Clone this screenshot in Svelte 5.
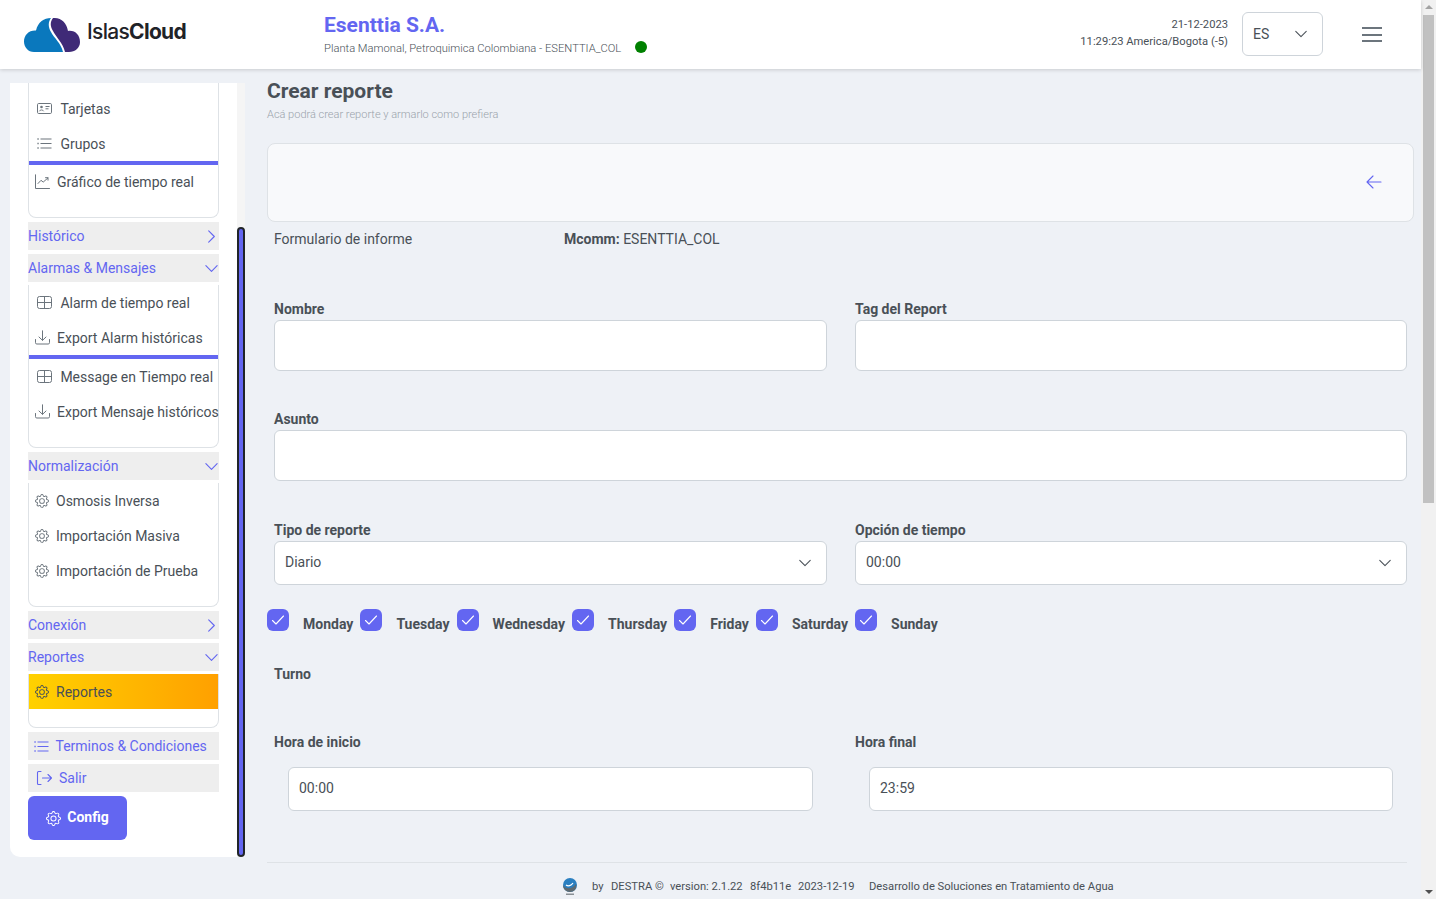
<script>
  const gear = 'gear', table = 'table', down = 'down';
  const groups = [
    { open: true, noHead: true, rows: [
      { t: 'Tarjetas', i: 'card', wide: true }, { t: 'Grupos', i: 'list', wide: true, line: true }, { t: 'Gráfico de tiempo real', i: 'chart' } ] },
    { title: 'Histórico' },
    { title: 'Alarmas & Mensajes', open: true, rows: [
      { t: 'Alarm de tiempo real', i: table, wide: true }, { t: 'Export Alarm históricas', i: down, line: true },
      { t: 'Message en Tiempo real', i: table, wide: true }, { t: 'Export Mensaje históricos', i: down } ] },
    { title: 'Normalización', open: true, rows: [
      { t: 'Osmosis Inversa', i: gear }, { t: 'Importación Masiva', i: gear }, { t: 'Importación de Prueba', i: gear } ] },
    { title: 'Conexión' },
    { title: 'Reportes', open: true, rows: [ { t: 'Reportes', i: gear, active: true } ] }
  ];
  const days = ['Monday', 'Tuesday', 'Wednesday', 'Thursday', 'Friday', 'Saturday', 'Sunday'];
</script>

{#snippet gearIcon(size)}
  <svg class="gear" width={size} height={size} viewBox="0 0 16 16" fill="currentColor" aria-hidden="true">
    <path d="M8 4.754a3.246 3.246 0 1 0 0 6.492 3.246 3.246 0 0 0 0-6.492zM5.754 8a2.246 2.246 0 1 1 4.492 0 2.246 2.246 0 0 1-4.492 0z"/>
    <path d="M9.796 1.343c-.527-1.79-3.065-1.79-3.592 0l-.094.319a.873.873 0 0 1-1.255.52l-.292-.16c-1.64-.892-3.433.902-2.54 2.541l.159.292a.873.873 0 0 1-.52 1.255l-.319.094c-1.79.527-1.79 3.065 0 3.592l.319.094a.873.873 0 0 1 .52 1.255l-.16.292c-.892 1.64.901 3.434 2.541 2.54l.292-.159a.873.873 0 0 1 1.255.52l.094.319c.527 1.79 3.065 1.79 3.592 0l.094-.319a.873.873 0 0 1 1.255-.52l.292.16c1.64.893 3.434-.902 2.54-2.541l-.159-.292a.873.873 0 0 1 .52-1.255l.319-.094c1.79-.527 1.79-3.065 0-3.592l-.319-.094a.873.873 0 0 1-.52-1.255l.16-.292c.893-1.64-.902-3.433-2.541-2.54l-.292.159a.873.873 0 0 1-1.255-.52l-.094-.319zm-2.633.283c.246-.835 1.428-.835 1.674 0l.094.319a1.873 1.873 0 0 0 2.693 1.115l.291-.16c.764-.415 1.6.42 1.184 1.185l-.159.292a1.873 1.873 0 0 0 1.116 2.692l.318.094c.835.246.835 1.428 0 1.674l-.319.094a1.873 1.873 0 0 0-1.115 2.693l.16.291c.415.764-.42 1.6-1.185 1.184l-.291-.159a1.873 1.873 0 0 0-2.693 1.116l-.094.318c-.246.835-1.428.835-1.674 0l-.094-.319a1.873 1.873 0 0 0-2.692-1.115l-.292.16c-.764.415-1.6-.42-1.184-1.185l.159-.291A1.873 1.873 0 0 0 1.945 8.93l-.319-.094c-.835-.246-.835-1.428 0-1.674l.319-.094A1.873 1.873 0 0 0 3.06 4.377l-.16-.292c-.415-.764.42-1.6 1.185-1.184l.292.159a1.873 1.873 0 0 0 2.692-1.115l.094-.319z"/>
  </svg>
{/snippet}

{#snippet listIcon(size)}
  <svg width={size} height={size} viewBox="0 0 15 15" fill="none" stroke="currentColor" stroke-width="1.1" stroke-linecap="butt" aria-hidden="true">
    <path d="M3.500 3h11M3.500 7.500h11M3.500 12h11"/>
    <path d="M.4 3h1.300M.4 7.500h1.300M.4 12h1.300" stroke-width="1.300"/>
  </svg>
{/snippet}

{#snippet chevron(dir)}
  <svg class="chev" width="16" height="16" viewBox="0 0 16 16" fill="none" stroke="currentColor" stroke-width="1.2" stroke-linecap="round" stroke-linejoin="round" aria-hidden="true">
    {#if dir === 'down'}<path d="M2 5l6 6 6-6"/>{:else}<path d="M5 2l6 6-6 6"/>{/if}
  </svg>
{/snippet}

{#snippet rowIcon(i)}
  {#if i === 'gear'}
    {@render gearIcon(14)}
  {:else if i === 'list'}
    {@render listIcon(15)}
  {:else if i === 'card'}
    <svg width="15" height="15" viewBox="0 0 15 15" fill="none" stroke="currentColor" stroke-width="1" aria-hidden="true">
      <rect x=".5" y="2.500" width="14" height="10" rx="1.200"/>
      <circle cx="4.500" cy="6" r="1.300" fill="currentColor" stroke="none"/>
      <path d="M2.300 10.300c.4-1.800 4-1.800 4.400 0" stroke-width=".9"/>
      <path d="M8.500 5.500h4M8.500 7.800h3"/>
    </svg>
  {:else if i === 'table'}
    <svg width="15" height="15" viewBox="0 0 15 15" fill="none" stroke="currentColor" stroke-width="1" aria-hidden="true">
      <rect x=".5" y="1.500" width="14" height="12" rx="2"/><path d="M.5 7.500h14M7.500 1.500v12"/>
    </svg>
  {:else if i === 'down'}
    <svg width="15" height="15" viewBox="0 0 15 15" fill="none" stroke="currentColor" stroke-width="1" stroke-linecap="round" stroke-linejoin="round" aria-hidden="true">
      <path d="M.5 9.500v3.200a1.300 1.300 0 0 0 1.300 1.300h11.400a1.300 1.300 0 0 0 1.300-1.300V9.500M7.500 .8v9.400M4 7l3.500 3.400L11 7"/>
    </svg>
  {:else if i === 'chart'}
    <svg width="15" height="15" viewBox="0 0 15 15" fill="none" stroke="currentColor" stroke-width="1" stroke-linecap="round" stroke-linejoin="round" aria-hidden="true">
      <path d="M.5 .8v13.700h14M3 9.500l3-3.200 2.200 1.800 4.800-4.200M10.500 3.700H13v2.500"/>
    </svg>
  {/if}
{/snippet}

<div class="window">
  <div class="page">
    <header class="topbar">
      <div class="brand">
        <svg width="56" height="35" viewBox="0 0 56 35" aria-hidden="true">
          <path fill="#0a78bd" d="M10 35C4 35 0 30 0 24.500 0 18 5 13 12 13.500 14 5 20 1 27 1 24 5 24 10 27 15 30 21 37 26 39 35Z"/>
          <path fill="#3f2a77" d="M29 1C37 0 43 6 44 14 51 13 56 18 56 25 56 31 51 35 45 35H41C39 26 32 20 29 14 26 9 26 5 29 1Z"/>
        </svg>
        <span class="brand-name"><span class="islas">Islas</span><span class="cloud">Cloud</span></span>
      </div>
      <div class="company">
        <div class="company-name">Esenttia S.A.</div>
        <div class="company-sub"><span>Planta Mamonal, Petroquimica Colombiana - ESENTTIA_COL</span><i class="dot"></i></div>
      </div>
      <div class="clock"><div>21-12-2023</div><div>11:29:23 America/Bogota (-5)</div></div>
      <div class="lang"><span>ES</span>{@render chevron('down')}</div>
      <div class="burger"><i></i><i></i><i></i></div>
    </header>

    <div class="body">
      <aside class="side">
        <nav class="side-card">
          {#each groups as g}
            {#if !g.noHead}
              <div class="menu-head"><span>{g.title}</span>{@render chevron(g.open ? 'down' : 'right')}</div>
            {/if}
            {#if g.open}
              <div class="sub" class:cut={g.noHead}>
                {#each g.rows as r}
                  <div class="row" class:wide={r.wide} class:active={r.active}>{@render rowIcon(r.i)}<span>{r.t}</span></div>
                  {#if r.line}<div class="divider"></div>{/if}
                {/each}
              </div>
            {/if}
          {/each}
          <div class="menu-head plain"><span class="lead">{@render listIcon(15)}</span><span>Terminos &amp; Condiciones</span></div>
          <div class="menu-head plain salir">
            <svg width="16" height="16" viewBox="0 0 16 16" fill="none" stroke="currentColor" stroke-width="1.100" stroke-linecap="round" stroke-linejoin="round" aria-hidden="true">
              <path d="M5 1.500H2.500a1 1 0 0 0-1 1v11a1 1 0 0 0 1 1H5M6.500 8h9M12 4.500 15.500 8 12 11.500"/>
            </svg>
            <span>Salir</span>
          </div>
          <button class="config" type="button">{@render gearIcon(15)}<span>Config</span></button>
        </nav>
        <div class="side-track"><div class="side-thumb"></div></div>
      </aside>

      <main class="main">
        <h1>Crear reporte</h1>
        <p class="lead-text">Acá podrá crear reporte y armarlo como prefiera</p>

        <div class="toolbar">
          <svg width="16" height="16" viewBox="0 0 16 16" fill="none" stroke="#6366f1" stroke-width="1.100" stroke-linecap="round" stroke-linejoin="round" aria-hidden="true">
            <path d="M15 8H1M7 2 1 8l6 6"/>
          </svg>
        </div>

        <div class="form">
          <div class="info">
            <span class="info-a">Formulario de informe</span>
            <span><b>Mcomm:</b> ESENTTIA_COL</span>
          </div>

          <div class="cols r1">
            <label class="field"><span>Nombre</span><div class="input tall"></div></label>
            <label class="field"><span>Tag del Report</span><div class="input tall"></div></label>
          </div>
          <label class="field r2"><span>Asunto</span><div class="input tall"></div></label>
          <div class="cols r3">
            <label class="field"><span>Tipo de reporte</span><div class="input select"><em>Diario</em>{@render chevron('down')}</div></label>
            <label class="field"><span>Opción de tiempo</span><div class="input select"><em>00:00</em>{@render chevron('down')}</div></label>
          </div>

          <div class="days">
            {#each days as d}
              <div class="day">
                <span class="check">
                  <svg width="14" height="14" viewBox="0 0 14 14" fill="none" stroke="#fff" stroke-width="1.100" stroke-linecap="round" stroke-linejoin="round" aria-hidden="true"><path d="M1.500 7.500 5 11l7.500-8"/></svg>
                </span>
                <span class="day-name">{d}</span>
              </div>
            {/each}
          </div>

          <div class="turno">Turno</div>

          <div class="cols r4">
            <label class="field"><span>Hora de inicio</span><div class="input select inset"><em>00:00</em></div></label>
            <label class="field"><span>Hora final</span><div class="input select inset"><em>23:59</em></div></label>
          </div>
        </div>

        <footer class="foot">
          <svg class="foot-logo" width="16" height="18" viewBox="0 0 16 18" aria-hidden="true">
            <circle cx="8" cy="7" r="7" fill="#2a7fc0"/>
            <path d="M1 7c2 4 9 5 13-1 1 5-2 8-6 8S1 11 1 7Z" fill="#5f6a70"/>
            <path d="M4 7c2 1.500 5 1 7-2" fill="none" stroke="#fff" stroke-width="1.200"/>
            <rect x="4" y="15.500" width="8" height="1.500" fill="#8a9095"/>
          </svg>
          <span class="f-by">by</span><span class="f-de">DESTRA ©</span><span class="f-ve">version: 2.1.22</span><span class="f-ha">8f4b11e</span><span class="f-da">2023-12-19</span><span>Desarrollo de Soluciones en Tratamiento de Agua</span>
        </footer>
      </main>
    </div>
  </div>

  <div class="vbar" aria-hidden="true">
    <i class="up"></i>
    <div class="vthumb"></div>
    <i class="dn"></i>
  </div>
</div>

<style>
  :global(body) { margin: 0; overflow: hidden; background: #eef1f6; }
  .window { display: flex; width: 1436px; height: 899px; overflow: hidden; font-family: Roboto, "Noto Sans", sans-serif; color: #495057; font-size: 14px; }
  .page { width: 1421px; height: 899px; display: flex; flex-direction: column; }

  .topbar { height: 69px; flex: none; background: #fff; box-shadow: 0 1px 4px rgba(0,0,0,.16); display: flex; align-items: center; position: relative; z-index: 2; }
  .brand { width: 324px; padding-left: 24px; box-sizing: border-box; display: flex; align-items: center; gap: 7px; height: 100%; }
  .brand-name { font-family: Inter, sans-serif; font-size: 21px; color: #1f2328; letter-spacing: -.7px; margin-top: -7px; }
  .islas { font-weight: 500; }
  .cloud { font-weight: 700; }
  .company { flex: 1; display: flex; flex-direction: column; }
  .company-name { font-size: 21px; font-weight: 700; color: #6366f1; line-height: 24px; margin-top: -1px; }
  .company-sub { font-size: 11.2px; font-weight: 300; color: #495057; margin-top: 5px; line-height: 13px; display: flex; align-items: center; gap: 14px; }
  .dot { width: 12px; height: 12px; border-radius: 50%; background: #008000; margin-top: -3px; }
  .clock { text-align: right; font-size: 11.2px; color: #495057; line-height: 17px; margin: -4px 14px 0 0; }
  .lang { width: 81px; height: 44px; box-sizing: border-box; border: 1px solid #ced4da; border-radius: 6px; display: flex; align-items: center; justify-content: space-between; padding: 0 14px 0 10px; font-size: 14px; margin-top: -2px; }
  .lang .chev { width: 14px; height: 14px; color: #495057; }
  .burger { width: 20px; margin: 0 39px 0 39px; display: flex; flex-direction: column; gap: 4.5px; }
  .burger i { display: block; height: 2px; background: #6c757d; }

  .body { flex: 1; display: flex; min-height: 0; }
  .side { display: flex; margin: 14px 0 0 10px; height: 774px; flex: none; }
  .side-card { width: 227px; box-sizing: border-box; padding: 0 18px; background: #fff; border-radius: 0 0 0 10px; }
  .side-track { width: 8px; background: #f5f5f5; display: flex; align-items: flex-end; }
  .side-thumb { width: 8px; height: 630px; box-sizing: border-box; border: 2px solid #212529; border-radius: 5px; background: #6366f1; }

  .menu-head { height: 28px; margin-top: 4px; background: #eee; color: #6366f1; display: flex; align-items: center; justify-content: space-between; font-size: 14px; }
  .menu-head .chev { width: 15px; height: 15px; }
  .plain { justify-content: flex-start; padding-left: 6px; gap: 6.5px; }
  .lead { display: flex; }
  .salir { padding-left: 8px; gap: 7px; }
  .sub { border: 1px solid #dee2e6; border-top: 0; border-radius: 0 0 8px 8px; padding-bottom: 18px; }
  .sub .row:first-child { margin-top: 3px; }
  .sub.cut { padding-top: 5px; }
  .sub.cut .divider { margin-bottom: -1px; }
  .row { height: 35px; display: flex; align-items: center; gap: 7px; padding-left: 6px; color: #495057; white-space: nowrap; font-size: 14px; }
  .row svg { color: #6c757d; flex: none; }
  .row.wide { padding-left: 8px; gap: 8.4px; }
  .row.active { background: linear-gradient(90deg, #ffd100, #ffa000); }
  .row.active svg { color: #495057; }
  .divider { height: 4px; background: #6366f1; }

  .config { margin-top: 4px; width: 99px; height: 44px; border: 0; border-radius: 6px; background: #6366f1; color: #fff; display: flex; align-items: center; justify-content: center; gap: 6px; font: 700 14px Roboto, sans-serif; }
  .config span { margin-top: -2px; }

  .main { flex: 1; min-width: 0; padding: 0 7px 0 22px; }
  h1 { margin: 8px 0 0; font-size: 21px; line-height: 28px; font-weight: 700; color: #495057; }
  .lead-text { margin: 3px 0 0; font-size: 11px; line-height: 14px; font-weight: 300; color: #9aa3ab; }
  .toolbar { margin-top: 21px; height: 79px; box-sizing: border-box; border: 1px solid #dee2e6; border-radius: 8px; background: #f8f9fb; display: flex; align-items: center; justify-content: flex-end; padding: 0 31px 2px 0; }
  .form { padding: 0 7px; }
  .info { display: flex; height: 34px; align-items: center; }
  .info-a { width: 290px; }
  .info b { font-weight: 700; }
  .cols { display: grid; grid-template-columns: 553px 552px; gap: 28px; }
  .field { display: block; }
  .field > span { display: block; font-weight: 700; line-height: 17px; height: 17px; color: #495057; }
  .input { margin-top: 2px; box-sizing: border-box; background: #fff; border: 1px solid #ced4da; border-radius: 6px; }
  .tall { height: 51px; }
  .r1 { margin-top: 45px; }
  .r2 { margin-top: 40px; }
  .r3 { margin-top: 41px; }
  .select { height: 44px; display: flex; align-items: center; justify-content: space-between; padding: 0 14px 0 10px; }
  .select em { font-style: normal; font-size: 14px; margin-top: -2px; }
  .select .chev { width: 14px; height: 14px; color: #495057; }
  .r4 { margin-top: 51px; }
  .inset { margin: 16px 14px 0; }

  .days { display: flex; margin: 24px 0 0 -7px; gap: 7.1px; }
  .day { display: flex; align-items: flex-start; }
  .check { width: 22px; height: 22px; border-radius: 6px; background: #6366f1; display: flex; align-items: center; justify-content: center; }
  .day-name { margin-left: 14px; margin-top: 6px; font-weight: 700; line-height: 18px; }
  .turno { margin-top: 33px; font-weight: 700; line-height: 17px; }

  .foot { margin-top: 51px; padding: 15px 0 0; border-top: 1px solid #dee2e6; display: flex; align-items: center; font-size: 11.2px; line-height: 18px; color: #495057; padding-left: 295px; margin-right: 7px; white-space: nowrap; }
  .foot-logo { margin-right: 14px; flex: none; }
  .f-by { width: 19px; }
  .f-de { width: 59px; }
  .f-ve { width: 80px; }
  .f-ha { width: 48px; }
  .f-da { width: 71px; }

  .vbar { width: 15px; height: 899px; flex: none; background: #f1f1f1; display: flex; flex-direction: column; align-items: center; }
  .vthumb { width: 11px; height: 488px; background: #c1c1c1; margin-top: 5px; }
  .up { width: 0; height: 0; margin-top: 5px; border: 4px solid transparent; border-top: 0; border-bottom: 4px solid #a3a3a3; margin-bottom: 1px; }
  .dn { width: 0; height: 0; margin-top: auto; margin-bottom: 5px; border: 4px solid transparent; border-bottom: 0; border-top: 4px solid #505050; }
</style>
